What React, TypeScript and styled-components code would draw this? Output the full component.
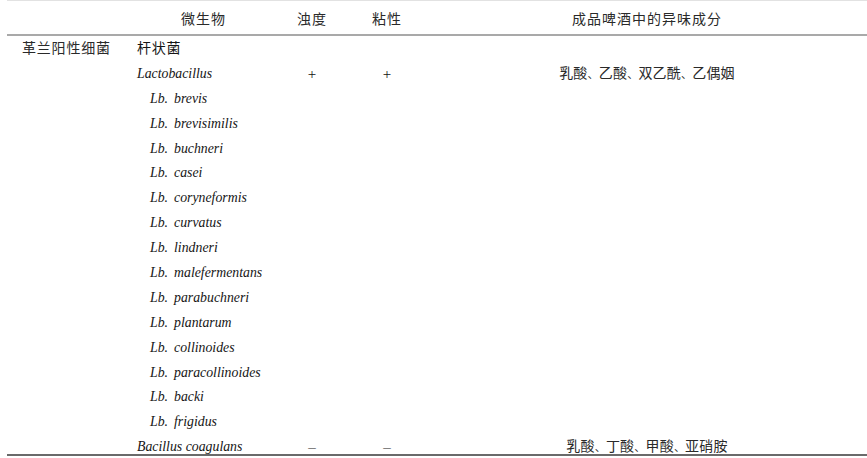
import styled, { createGlobalStyle } from "styled-components";

const GlobalStyle = createGlobalStyle`
  html, body {
    margin: 0;
    padding: 0;
    background: #ffffff;
  }
  body {
    font-family: "Liberation Serif", "Noto Sans CJK SC", serif;
    color: #1a1a1a;
  }
`;

type Row = {
  name: string;
  kind: "group" | "genus" | "species";
  turbidity?: string;
  viscosity?: string;
  flavor?: string[];
};

const rows: Row[] = [
  { name: "杆状菌", kind: "group" },
  {
    name: "Lactobacillus",
    kind: "genus",
    turbidity: "+",
    viscosity: "+",
    flavor: ["乳酸", "乙酸", "双乙酰", "乙偶姻"],
  },
  { name: "brevis", kind: "species" },
  { name: "brevisimilis", kind: "species" },
  { name: "buchneri", kind: "species" },
  { name: "casei", kind: "species" },
  { name: "coryneformis", kind: "species" },
  { name: "curvatus", kind: "species" },
  { name: "lindneri", kind: "species" },
  { name: "malefermentans", kind: "species" },
  { name: "parabuchneri", kind: "species" },
  { name: "plantarum", kind: "species" },
  { name: "collinoides", kind: "species" },
  { name: "paracollinoides", kind: "species" },
  { name: "backi", kind: "species" },
  { name: "frigidus", kind: "species" },
  {
    name: "Bacillus coagulans",
    kind: "genus",
    turbidity: "–",
    viscosity: "–",
    flavor: ["乳酸", "丁酸", "甲酸", "亚硝胺"],
  },
];

const App = () => {
  return (
    <>
      <GlobalStyle />
      <Table>
        <Header>
          <Cell />
          <HeadCell>微生物</HeadCell>
          <HeadCell>浊度</HeadCell>
          <HeadCell>粘性</HeadCell>
          <HeadCell className='flavor'>成品啤酒中的异味成分</HeadCell>
        </Header>
        {rows.map((row, i) => (
          <BodyRow key={row.name}>
            <Cell className='category'>{i === 0 ? "革兰阳性细菌" : ""}</Cell>
            <NameCell $kind={row.kind}>
              {row.kind === "species" ? (
                <>
                  <span className='abbr'>Lb.</span>
                  {row.name}
                </>
              ) : (
                row.name
              )}
            </NameCell>
            <Mark $dash={row.turbidity === "–"}>{row.turbidity}</Mark>
            <Mark $dash={row.viscosity === "–"}>{row.viscosity}</Mark>
            <Flavor>
              {row.flavor?.map((item, j) => (
                <span key={item}>
                  {j > 0 && <Comma>、</Comma>}
                  {item}
                </span>
              ))}
            </Flavor>
          </BodyRow>
        ))}
      </Table>
    </>
  );
};

export default App;

const columns = "130px 133px 84px 66px 1fr";

const Table = styled.div`
  margin-left: 7px;
  width: 860px;
  border-top: 1px solid #e2e2e2;
  border-bottom: 2px solid #6a6a6a;
`;

const Header = styled.div`
  display: grid;
  grid-template-columns: ${columns};
  height: 33px;
  align-items: center;
  border-bottom: 2px solid #a9a9a9;
`;

const Cell = styled.div`
  font-size: 14px;
  &.category {
    padding-left: 15px;
    letter-spacing: 0.8px;
    font-family: "Noto Sans CJK SC", sans-serif;
    color: #2a2a2a;
  }
`;

const HeadCell = styled.div`
  text-align: center;
  font-family: "Noto Sans CJK SC", sans-serif;
  font-size: 14px;
  letter-spacing: 1px;
  color: #2a2a2a;
  &.flavor {
    padding-left: 7px;
  }
`;

const BodyRow = styled.div`
  display: grid;
  grid-template-columns: ${columns};
  height: 24.9px;
  align-items: start;
  line-height: 22px;
  &:last-child {
    height: 20px;
  }
`;

const NameCell = styled.div<{ $kind: Row["kind"] }>`
  padding-left: ${(p) => (p.$kind === "species" ? "13px" : "0")};
  padding-top: ${(p) => (p.$kind === "group" ? "0" : "2px")};
  font-size: ${(p) => (p.$kind === "group" ? "14px" : "13.8px")};
  font-style: ${(p) => (p.$kind === "group" ? "normal" : "italic")};
  font-family: ${(p) =>
    p.$kind === "group"
      ? `"Noto Sans CJK SC", sans-serif`
      : `"Liberation Serif", serif`};
  letter-spacing: ${(p) => (p.$kind === "group" ? "0.8px" : "0")};
  white-space: nowrap;
  color: #151515;
  .abbr {
    margin-right: 6px;
  }
`;

const Mark = styled.div<{ $dash: boolean }>`
  padding-top: 2px;
  text-align: center;
  font-family: "Liberation Serif", serif;
  font-size: 15px;
  color: ${(p) => (p.$dash ? "#666" : "#111")};
`;

const Flavor = styled.div`
  padding-left: 7px;
  text-align: center;
  font-family: "Noto Sans CJK SC", sans-serif;
  font-size: 14px;
  letter-spacing: 0.2px;
  color: #2a2a2a;
`;

const Comma = styled.span`
  font-size: 11px;
`;
